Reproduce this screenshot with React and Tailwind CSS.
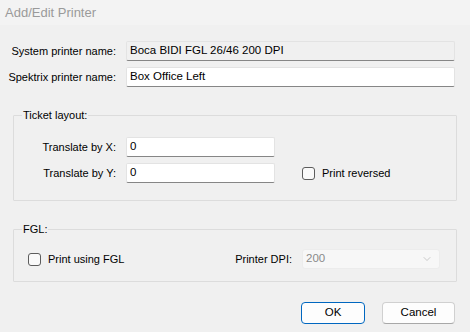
import { ChevronDown } from 'lucide-react'

const font = { fontFamily: '"Liberation Sans", Arial, sans-serif' }

function TextBox({ value, readOnly, className = '' }) {
  return (
    <div
      className={`h-[20px] flex items-center pl-[3px] rounded-[2px] border border-[#e3e3e3] border-b-[#868686] text-[11.5px] text-black ${
        readOnly ? 'bg-[#f0f0f0]' : 'bg-white'
      } ${className}`}
    >
      {value}
    </div>
  )
}

function CheckBox({ label }) {
  return (
    <label className="flex items-center gap-[7px] text-[11px] text-black whitespace-nowrap">
      <span className="shrink-0 w-[13px] h-[13px] rounded-[3px] border border-[#5c5c5c] bg-[#f9f9f9]" />
      {label}
    </label>
  )
}

function Row({ label, children, className = '' }) {
  return (
    <div className={`flex items-center ${className}`}>
      <span className="shrink-0 w-[117px] text-right text-[11px] text-black pr-[1px] whitespace-nowrap">
        {label}
      </span>
      <div className="ml-[9px] flex-1 flex items-center">{children}</div>
    </div>
  )
}

export default function App() {
  return (
    <div className="w-[470px] h-[332px] bg-[#f0f0f0] flex flex-col" style={font}>
      <div className="h-[25px] bg-[#f3f3f3] flex items-center pl-[5px] text-[13px] text-[#9a9a9a]">
        Add/Edit Printer
      </div>

      <div className="flex flex-col pr-[15px]">
        <Row label="System printer name:" className="mt-[16px]">
          <TextBox value="Boca BIDI FGL 26/46 200 DPI" readOnly className="flex-1" />
        </Row>
        <Row label="Spektrix printer name:" className="mt-[6px]">
          <TextBox value="Box Office Left" className="flex-1" />
        </Row>
      </div>

      <fieldset className="mt-[21px] ml-[13px] w-[444px] h-[93px] border border-[#dcdcdc] rounded-[1px]">
        <legend className="ml-[8px] px-[1px] text-[11px] text-black leading-[14px]">Ticket layout:</legend>
        <Row label="Translate by X:" className="mt-[15px] -ml-[14px]">
          <TextBox value="0" className="w-[149px]" />
        </Row>
        <Row label="Translate by Y:" className="mt-[6px] -ml-[14px]">
          <TextBox value="0" className="w-[149px]" />
          <div className="ml-[27px]">
            <CheckBox label="Print reversed" />
          </div>
        </Row>
      </fieldset>

      <fieldset className="mt-[21px] ml-[13px] w-[444px] h-[60px] border border-[#dcdcdc] rounded-[1px]">
        <legend className="ml-[8px] px-[1px] text-[11px] text-black leading-[14px]">FGL:</legend>
        <div className="flex items-center mt-[13px]">
          <div className="ml-[14px] w-[196px] shrink-0">
            <CheckBox label="Print using FGL" />
          </div>
          <span className="shrink-0 w-[68px] text-right text-[11px] text-black whitespace-nowrap">Printer DPI:</span>
          <div className="shrink-0 ml-[10px] w-[138px] h-[20px] rounded-[3px] bg-[#f7f7f7] border border-[#ececec] flex items-center justify-between pl-[3px] pr-[6px] text-[11.5px] text-[#8a8a8a]">
            200
            <ChevronDown size={12} strokeWidth={1} className="text-[#9a9a9a]" />
          </div>
        </div>
      </fieldset>

      <div className="flex justify-end gap-[17px] mt-[20px] pr-[15px]">
        <button className="w-[64px] h-[22px] rounded-[4px] border border-[#0067c0] bg-[#fdfdfd] text-[11.5px] text-black">
          OK
        </button>
        <button className="w-[73px] h-[22px] rounded-[4px] border border-[#d0d0d0] border-b-[#a8a8a8] bg-[#fdfdfd] text-[11.5px] text-black">
          Cancel
        </button>
      </div>
    </div>
  )
}
